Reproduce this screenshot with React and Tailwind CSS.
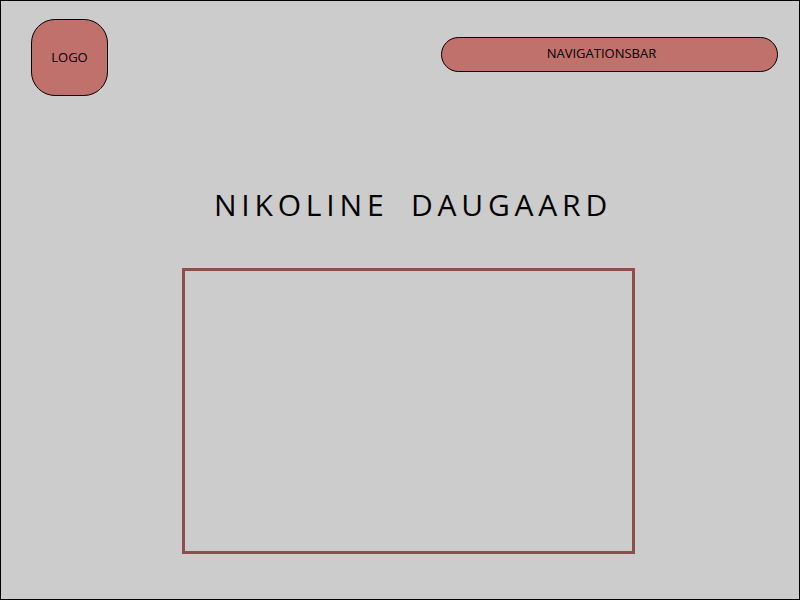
import React from "react";

const App = () => {
  return (
    <div
      className="w-[800px] h-[600px] border border-black bg-[#cccccc] flex flex-col"
      style={{ fontFamily: '"Open Sans", "Noto Sans", sans-serif' }}
    >
      {/* Header */}
      <div className="flex items-start justify-between pl-[30px] pr-[21px] pt-[18px]">
        <div className="w-[77px] h-[77px] rounded-[24px] border border-black bg-[#c1716b] flex items-center justify-center text-[13px] text-black">
          LOGO
        </div>
        <div className="mt-[18px] w-[337px] h-[35px] rounded-full border border-black bg-[#c1716b] flex items-center justify-center text-[13px] text-black pb-[2px] pr-[16px]">
          NAVIGATIONSBAR
        </div>
      </div>

      {/* Title */}
      <h1 className="mt-[94px] pl-[26px] text-center text-[30px] leading-none tracking-[0.16em] [word-spacing:10px] text-black font-normal">
        NIKOLINE DAUGAARD
      </h1>

      {/* Frame */}
      <div className="mt-[48px] ml-[181px] w-[453px] h-[286px] border-[3px] border-[#8c504c]" />
    </div>
  );
};

export default App;
